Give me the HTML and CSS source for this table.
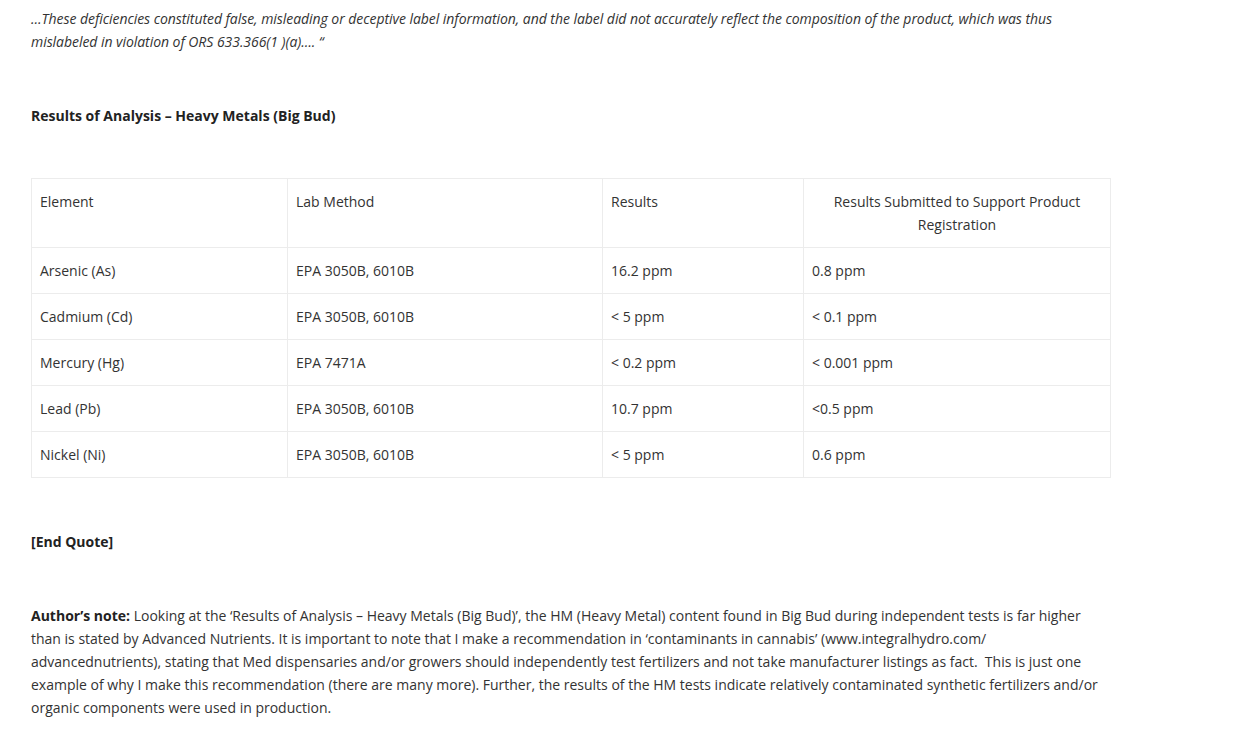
FILE: index.html
```html
<!DOCTYPE html>
<html lang="en">
<head>
<meta charset="utf-8">
<title>Results of Analysis – Heavy Metals</title>
<link rel="stylesheet" href="styles.css">
</head>
<body>
<article class="content">
  <p class="quote"><em>…These deficiencies constituted false, misleading or deceptive label information, and the label did not accurately reflect the composition of the product, which was thus mislabeled in violation of ORS 633.366(1 )(a)…. “</em></p>

  <p class="heading"><strong>Results of Analysis – Heavy Metals (Big Bud)</strong></p>

  <table class="results">
    <colgroup>
      <col class="c1"><col class="c2"><col class="c3"><col class="c4">
    </colgroup>
    <tr>
      <td>Element</td>
      <td>Lab Method</td>
      <td>Results</td>
      <td class="center">Results Submitted to Support Product Registration</td>
    </tr>
    <tr><td>Arsenic (As)</td><td>EPA 3050B, 6010B</td><td>16.2 ppm</td><td>0.8 ppm</td></tr>
    <tr><td>Cadmium (Cd)</td><td>EPA 3050B, 6010B</td><td>&lt; 5 ppm</td><td>&lt; 0.1 ppm</td></tr>
    <tr><td>Mercury (Hg)</td><td>EPA 7471A</td><td>&lt; 0.2 ppm</td><td>&lt; 0.001 ppm</td></tr>
    <tr><td>Lead (Pb)</td><td>EPA 3050B, 6010B</td><td>10.7 ppm</td><td>&lt;0.5 ppm</td></tr>
    <tr><td>Nickel (Ni)</td><td>EPA 3050B, 6010B</td><td>&lt; 5 ppm</td><td>0.6 ppm</td></tr>
  </table>

  <p class="endquote"><strong>[End Quote]</strong></p>

  <p class="note"><strong>Author’s note:</strong> Looking at the ‘Results of Analysis – Heavy Metals (Big Bud)’, the HM (Heavy Metal) content found in Big Bud during independent tests is far higher than is stated by Advanced Nutrients. It is important to note that I make a recommendation in ‘contaminants in cannabis’ (www.integralhydro.com/ advancednutrients), stating that Med dispensaries and/or growers should independently test fertilizers and not take manufacturer listings as fact.&nbsp; This is just one example of why I make this recommendation (there are many more). Further, the results of the HM tests indicate relatively contaminated synthetic fertilizers and/or organic components were used in production.</p>
</article>
</body>
</html>
```

FILE: styles.css
```css
html, body {
  margin: 0;
  padding: 0;
  background: #ffffff;
}

body {
  font-family: "Open Sans", "Liberation Sans", sans-serif;
  font-size: 14px;
  line-height: 23px;
  color: #333333;
}

.content {
  width: 1080px;
  padding: 7px 0 0 31px;
}

.content p {
  margin: 0;
}

.content .quote {
  margin-bottom: 51px;
  letter-spacing: -0.05px;
}

.content .heading {
  margin-bottom: 51px;
}

strong {
  font-weight: 700;
  color: #222222;
}

.results {
  width: 1079px;
  border-collapse: collapse;
  table-layout: fixed;
  margin-bottom: 52px;
}

.results col.c1 { width: 256px; }
.results col.c2 { width: 315px; }
.results col.c3 { width: 201px; }
.results col.c4 { width: 307px; }

.results td {
  border: 1px solid #ececec;
  padding: 11px 8px;
  vertical-align: top;
  text-align: left;
}

.results td.center {
  text-align: center;
}

.content .endquote {
  margin-bottom: 51px;
}
```
